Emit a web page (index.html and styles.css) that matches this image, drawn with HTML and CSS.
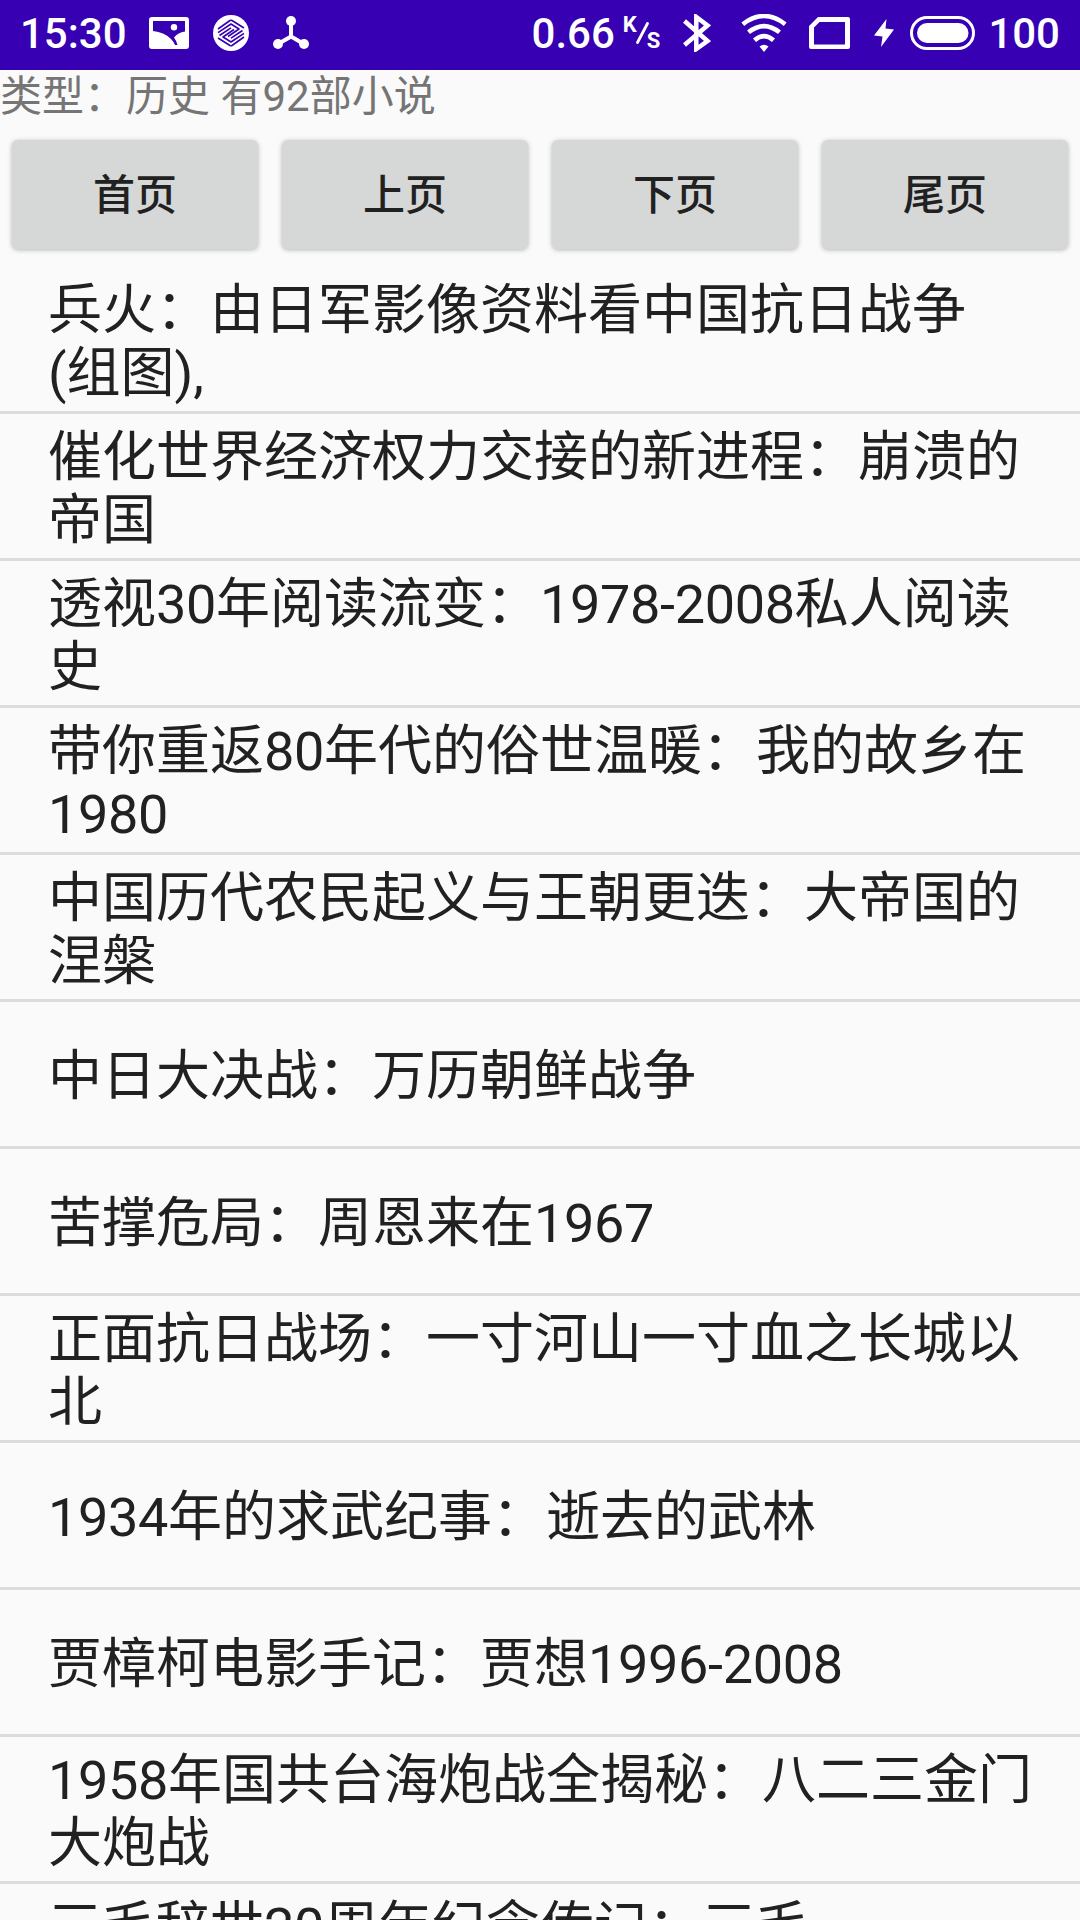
FILE: index.html
```html
<!DOCTYPE html>
<html lang="zh-CN">
<head>
<meta charset="utf-8">
<title>历史小说</title>
<link rel="stylesheet" href="styles.css">
</head>
<body>
<header class="status">
  <div class="status-left">
    <span class="clock">15:30</span>
    <svg class="icon-photo" width="40" height="32" viewBox="0 0 40 32"><path fill="#fff" fill-rule="evenodd" d="M3 0H37Q40 0 40 3V29Q40 32 37 32H3Q0 32 0 29V3Q0 0 3 0ZM4 4V14Q15 15 22 22Q25 25 26 28H28.500Q27 23 25 20.500Q29 15.500 36 14.500V4Z"/><circle cx="25" cy="10.300" r="3.200" fill="#fff"/></svg>
    <svg class="icon-carrier" width="36" height="36" viewBox="0 0 36 36"><circle cx="18" cy="18" r="18" fill="#fff"/><g fill="none" stroke="#3700b3" stroke-width="1.600" stroke-linejoin="round"><path d="M5 14L17 5.500Q18 5 19 5.500L31 13"/><path d="M31 22L19 30.500Q18 31 17 30.500L5 23"/><path d="M5 17.700L18 9L26 14L15 21.500"/><path d="M31 18.300L18 27L10 22L21 14.500"/><path d="M6.500 20.500L18 12.800M29.500 15.500L18 23.200"/></g></svg>
    <svg class="icon-share" width="36" height="34" viewBox="0 0 36 34"><g fill="#fff"><circle cx="18" cy="5" r="5"/><circle cx="5" cy="28" r="5"/><circle cx="31" cy="28" r="5"/></g><path d="M18 5V20.500L5 28M18 20.500L31 28" fill="none" stroke="#fff" stroke-width="4"/></svg>
  </div>
  <div class="status-right">
    <span class="speed">0.66</span>
    <span class="unit"><span class="unit-k">K</span><svg class="unit-slash" width="13" height="22" viewBox="0 0 13 22"><path d="M1.500 20.500L11.500 1.500" stroke="#fff" stroke-width="2.800" stroke-linecap="round"/></svg><span class="unit-s">S</span></span>
    <svg class="icon-bluetooth" width="28" height="38" viewBox="0 0 28 38"><path d="M1.500 7L24.500 27L13.300 35V3L24.500 11.500L1.500 31" fill="none" stroke="#fff" stroke-width="4.500"/></svg>
    <svg class="icon-wifi" width="46" height="38" viewBox="0 0 46 38"><g fill="none" stroke="#fff" stroke-width="4.600"><path d="M1.800 10.200Q23-6.200 44.200 10.200"/><path d="M7.500 18.300Q23 6 38.500 18.300"/><path d="M13.500 26.300Q23 18 32.500 26.300"/></g><path fill="#fff" d="M18.500 32.500Q23 28.800 27.500 32.500L23 38Z"/></svg>
    <svg class="icon-sim" width="41" height="32" viewBox="0 0 41 32"><path fill="#fff" fill-rule="evenodd" d="M9 0H39Q41 0 41 2V30Q41 32 39 32H2Q0 32 0 30V9ZM10.500 5L5 10.500V27.500H36V5Z"/></svg>
    <svg class="icon-bolt" width="20" height="28" viewBox="0 0 20 28"><path fill="#fff" d="M12.500 0L0 16.500L8.500 17.500L7 28L20 10.500L11.500 9.500Z"/></svg>
    <svg class="icon-battery" width="65" height="34" viewBox="0 0 65 34"><rect x="1.500" y="1.500" width="62" height="31" rx="15.500" fill="none" stroke="#fff" stroke-width="3"/><rect x="7" y="7" width="51.500" height="20" rx="10" fill="#fff"/></svg>
    <span class="charge">100</span>
  </div>
</header>
<p class="summary">类型：历史 有92部小说</p>
<nav class="pager">
  <button class="page-button">首页</button>
  <button class="page-button">上页</button>
  <button class="page-button">下页</button>
  <button class="page-button">尾页</button>
</nav>
<ul class="books">
  <li class="book">兵火：由日军影像资料看中国抗日战争<br>(组图),</li>
  <li class="book">催化世界经济权力交接的新进程：崩溃的<br>帝国</li>
  <li class="book">透视<span class="num">30</span>年阅读流变：<span class="num">1978-2008</span>私人阅读<br>史</li>
  <li class="book">带你重返<span class="num">80</span>年代的俗世温暖：我的故乡在<br><span class="num">1980</span></li>
  <li class="book">中国历代农民起义与王朝更迭：大帝国的<br>涅槃</li>
  <li class="book book-single">中日大决战：万历朝鲜战争</li>
  <li class="book book-single">苦撑危局：周恩来在<span class="num">1967</span></li>
  <li class="book">正面抗日战场：一寸河山一寸血之长城以<br>北</li>
  <li class="book book-single"><span class="num">1934</span>年的求武纪事：逝去的武林</li>
  <li class="book book-single">贾樟柯电影手记：贾想<span class="num">1996-2008</span></li>
  <li class="book"><span class="num">1958</span>年国共台海炮战全揭秘：八二三金门<br>大炮战</li>
  <li class="book">三毛辞世<span class="num">20</span>周年纪念传记：三毛</li>
</ul>
</body>
</html>
```
FILE: styles.css
```css
* { box-sizing: border-box; }

body {
  margin: 0;
  width: 1080px;
  height: 1920px;
  overflow: hidden;
  display: flex;
  flex-direction: column;
  background: #fafafa;
  color: #212121;
  font-family: Roboto, "Noto Sans CJK SC", sans-serif;
}

/* Status bar */
.status {
  flex: none;
  height: 70px;
  padding: 0 20px 4px 20px;
  display: flex;
  justify-content: space-between;
  align-items: center;
  background: #3700b3;
  color: #fff;
  font-size: 42px;
  font-weight: 500;
  line-height: 66px;
}

.status-left,
.status-right {
  display: flex;
  align-items: center;
}

.status svg { display: block; flex: none; }

.clock,
.speed,
.charge { padding-top: 1px; }

.icon-photo { margin-left: 22px; }
.icon-carrier { margin-left: 24px; }
.icon-share { margin-left: 24px; }

.unit {
  display: flex;
  margin-left: 8px;
  height: 34px;
  font-size: 22px;
  font-weight: 700;
  line-height: 22px;
}
.unit-k { margin-top: -2px; }
.unit-slash { margin: 6px -2px 0 -1px; }
.unit-s { margin-top: 14px; }

.icon-bluetooth { margin-left: 23px; }
.icon-wifi { margin-left: 30px; }
.icon-sim { margin-left: 22px; }
.icon-bolt { margin-left: 24px; }
.icon-battery { margin-left: 16px; }
.charge { margin-left: 13px; }

.summary {
  flex: none;
  margin: 0;
  height: 58px;
  padding-top: 1px;
  font-size: 42px;
  line-height: 51px;
  color: #757575;
}

/* Paging buttons */
.pager {
  flex: none;
  display: grid;
  grid-template-columns: repeat(4, 1fr);
  column-gap: 24px;
  height: 139px;
  padding: 12px 12px 17px;
}

.page-button {
  height: 109px;
  border: 0;
  padding: 3px 0 0;
  border-radius: 6px;
  background: #d6d7d7;
  box-shadow: 0 1px 5px rgba(0, 0, 0, .28);
  color: #212121;
  font: 500 42px/56px Roboto, "Noto Sans CJK SC", sans-serif;
}

/* Book list */
.books {
  flex: 1;
  min-height: 0;
  overflow: hidden;
  margin: 0;
  padding: 0;
  list-style: none;
}

.book {
  height: 147px;
  padding: 12px 0 0 48px;
  border-bottom: 3px solid #dcdcdc;
  font-size: 54px;
  line-height: 63px;
  white-space: nowrap;
}

.book-single { padding-top: 43px; }

.num { letter-spacing: -.33px; }
```
